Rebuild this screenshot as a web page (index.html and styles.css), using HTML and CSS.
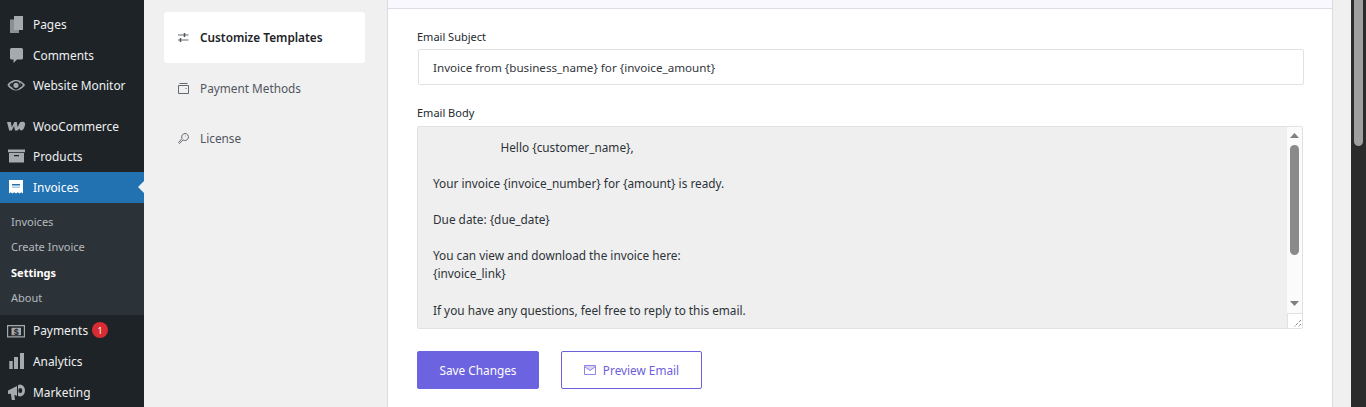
FILE: index.html
```html
<!DOCTYPE html>
<html lang="en">
<head>
<meta charset="utf-8">
<title>Invoice Settings</title>
<link rel="stylesheet" href="styles.css">
</head>
<body>
<div class="page">
  <nav class="adminmenu">
    <ul class="menu">
      <li class="item"><svg class="mi" viewBox="0 0 20 20"><path class="dim" d="M4 5.500h9V19H4z"/><path d="M8 2h9v14H8z"/></svg><span>Pages</span></li>
      <li class="item"><svg class="mi" viewBox="0 0 20 20"><path d="M5.500 3h10A1.500 1.500 0 0 1 17 4.500v8.500a1.500 1.500 0 0 1-1.500 1.500H11L7.500 18v-3.500h-2A1.500 1.500 0 0 1 4 13V4.500A1.500 1.500 0 0 1 5.500 3z"/></svg><span>Comments</span></li>
      <li class="item"><svg class="mi" viewBox="0 0 20 20"><path fill-rule="evenodd" d="M10 5c4.300 0 7.500 2.700 9 5-1.500 2.300-4.700 5.500-9 5.500S2.500 12.300 1.500 10C2.500 7.700 5.700 5 10 5zm0 1.200a4.300 4.300 0 1 0 0 8.600 4.300 4.300 0 0 0 0-8.600zM3.300 10c.9 1.200 1.900 2.100 3.100 2.800a5.600 5.600 0 0 1 0-5.600C5.200 7.900 4.200 8.800 3.300 10zm13.700 0c-.9-1.200-2-2.100-3.200-2.800a5.600 5.600 0 0 1 0 5.600c1.200-.7 2.300-1.600 3.200-2.800zM10 7.700a2.600 2.600 0 1 1 0 5.200 2.600 2.600 0 0 1 0-5.200z"/></svg><span>Website Monitor</span></li>
      <li class="item sep"><svg class="mi" viewBox="0 0 20 20"><path d="M1 6h3.800l1 5.200L8.300 6h2.500l.8 5.200L13.800 6.500c.8-1 2.200-1 3.500-.7 1.500.4 2 1.600 1.800 2.800-.3 2-1.600 6-3.700 6-1.200 0-1.800-.9-2-2l-1.900 2H9l-.9-4.500L5.800 14.600H3.200z"/></svg><span>WooCommerce</span></li>
      <li class="item"><svg class="mi" viewBox="0 0 20 20"><path fill-rule="evenodd" d="M2 3.500h17v2.700H2zM3 7h15v9.500H3zm5 2v1.300h5V9z"/></svg><span>Products</span></li>
      <li class="item current"><svg class="mi" viewBox="0 0 20 20"><path fill-rule="evenodd" d="M3 3h14v13.500l-1.700-1.200-1.700 1.200-1.800-1.200-1.800 1.200-1.800-1.200-1.800 1.200-1.700-1.200L3 16.500z"/><path class="band" d="M6 7h8v1.500H6z"/><path class="band-soft" d="M6 9.500h8V11H6z"/></svg><span>Invoices</span></li>
    </ul>
    <ul class="submenu">
      <li>Invoices</li>
      <li>Create Invoice</li>
      <li class="active">Settings</li>
      <li>About</li>
    </ul>
    <ul class="menu lower">
      <li class="item"><svg class="mi" viewBox="0 0 20 20"><path fill-rule="evenodd" d="M1 5h18v12.500H1zm1.200 1.200v10h15.600v-10zM5.500 7.800h9.500v7.400H5.500z"/><text x="10.200" y="14.500" class="dollar">$</text></svg><span>Payments</span><b class="badge">1</b></li>
      <li class="item"><svg class="mi" viewBox="0 0 20 20"><path d="M3.300 10h3.400v8H3.300zM8 6h4v12H8zM14 2h4v16h-4z"/></svg><span>Analytics</span></li>
      <li class="item"><svg class="mi" viewBox="0 0 20 20"><path fill-rule="evenodd" d="M2 8.500l9-4.500v10L8.300 12.800 9 18H5.800l-.9-6.200L2 12zM14 2.500a5 6 0 1 1 0 12 4 4 0 0 1-2-.8V3.300a4 4 0 0 1 2-.8zm.3 3.500a2 2.500 0 1 0 0 5 2 2.500 0 0 0 0-5z"/></svg><span>Marketing</span></li>
    </ul>
  </nav>

  <div class="content">
    <aside class="tabs">
      <a class="tab selected"><svg class="ti" viewBox="0 0 11 11"><path d="M0 3h10.500M0 8h10.500"/><path class="knob" d="M6.500 1v4M2.500 6v4"/></svg><span>Customize Templates</span></a>
      <a class="tab"><svg class="ti" viewBox="0 0 11 11"><path d="M1.500.5h8M.5 2.500h10v8H.5zM7.500 5.500h1"/></svg><span>Payment Methods</span></a>
      <a class="tab"><svg class="ti" viewBox="0 0 11 11"><path d="M7 .5a3.500 3.500 0 1 1-2 6.400L1.500 10.500.5 9.500 4 5.500A3.500 3.500 0 0 1 7 .5zM7.500 3h.5"/></svg><span>License</span></a>
    </aside>

    <main class="panel">
      <div class="panel-top"></div>
      <div class="panel-body">
        <label class="label">Email Subject</label>
        <div class="input">Invoice from {business_name} for {invoice_amount}</div>
        <label class="label body-label">Email Body</label>
        <div class="textarea">
          <div class="ta-text"><pre>                      Hello {customer_name},

Your invoice {invoice_number} for {amount} is ready.

Due date: {due_date}

You can view and download the invoice here:
{invoice_link}

If you have any questions, feel free to reply to this email.</pre></div>
          <div class="ta-bar">
            <svg class="arrow" viewBox="0 0 9 5"><path d="M4.500 0 9 5H0z"/></svg>
            <div class="thumb"></div>
            <svg class="arrow" viewBox="0 0 9 5"><path d="M0 0h9L4.500 5z"/></svg>
            <div class="resizer"><svg viewBox="0 0 14 14"><path d="M13 6l-7 7M13 10l-3 3"/></svg></div>
          </div>
        </div>
        <div class="actions">
          <button class="btn primary">Save Changes</button>
          <button class="btn outline"><svg class="mail" viewBox="0 0 12 10"><path class="flap" d="M.5.5h11v1L6 5.500.5 1.500z"/><path d="M.5.5h11v9H.5zM.5 1.500 6 5.500l5.500-4"/></svg>Preview Email</button>
        </div>
      </div>
    </main>
  </div>

  <div class="page-scroll"><div class="page-thumb"></div></div>
</div>
</body>
</html>
```
FILE: styles.css
```css
* { box-sizing: border-box; }
html, body { margin: 0; padding: 0; height: 407px; overflow: hidden; }
body { background: #f0f0f1; font-family: "Noto Sans", "Open Sans", sans-serif; font-size: 11.800px; color: #2c3338; }
ul { list-style: none; margin: 0; padding: 0; }
.page { display: flex; height: 407px; overflow: hidden; }

.adminmenu { width: 144px; flex: none; background: #1d2327; color: #f0f0f1; height: 407px; padding-top: 8.700px; overflow: hidden; }
.item { display: flex; align-items: center; height: 30.600px; padding-left: 6px; font-size: 11.900px; gap: 7px; color: #f0f0f1; position: relative; }
.item.sep { margin-top: 10px; }
.lower .item { height: 31px; }
.mi { width: 20px; height: 20px; fill: #a7aaad; flex: none; }
.mi .dim { fill: #8c8f94; }
.dollar { font-size: 9px; font-weight: 700; text-anchor: middle; fill: #1d2327; font-family: "Liberation Sans", sans-serif; }
.item.current { background: #2271b1; color: #fff; height: 31.200px; }
.item.current .mi { fill: #fff; }
.item.current .mi .band { fill: #2271b1; }
.item.current .mi .band-soft { fill: #a9c8e2; }
.item.current::after { content: ""; position: absolute; right: 0; top: 9px; border: 6.500px solid transparent; border-right-color: #f0f0f1; border-left: 0; }
.submenu { background: #2c3338; padding: 6px 0 5px; height: 112px; font-size: 11px; color: #b4b9be; }
.submenu li { height: 25.400px; line-height: 25.400px; padding-left: 11px; }
.submenu .active { color: #fff; font-weight: 700; }
.badge { width: 16px; height: 16px; border-radius: 50%; background: #d92b32; color: #fff; font-size: 9px; font-weight: 400; display: flex; align-items: center; justify-content: center; margin-left: -3px; }

.content { flex: 1; display: flex; min-width: 0; padding-left: 20px; }
.tabs { width: 223px; flex: none; display: flex; flex-direction: column; padding-top: 12px; }
.tab { width: 201px; height: 51px; display: flex; align-items: center; gap: 11px; padding: 0 0 1px 14px; border-radius: 3px; color: #50575e; font-size: 11.800px; }
.tab + .tab { height: 50px; padding-bottom: 0; }
.tab.selected { background: #fff; color: #1d2327; font-weight: 600; }
.ti { width: 11px; height: 11px; fill: none; stroke: #646970; stroke-width: 1; flex: none; }
.ti .knob { stroke-width: 1.500; stroke: #50575e; }

.panel { width: 946px; flex: none; background: #fff; border-left: 1px solid #dcdcde; border-right: 1px solid #dcdcde; height: 407px; display: flex; flex-direction: column; }
.panel-top { height: 9px; background: #f8f8fe; border-bottom: 1px solid #dcdce4; flex: none; }
.panel-body { padding: 19px 29px 0; }
.label { display: block; font-size: 11px; line-height: 17px; color: #23282d; }
.body-label { margin-top: 19px; }
.input { margin: 4px 0 0 1px; height: 36px; border: 1px solid #e2e2e2; border-radius: 2px; background: #fff; line-height: 36px; padding-left: 14px; color: #32373c; width: 886px; font-size: 11.650px; }
.textarea { margin-top: 5px; width: 886px; height: 203px; display: flex; border: 1px solid #e2e2e2; border-radius: 2px; background: #efefef; overflow: hidden; }
.ta-text { flex: 1; padding: 10.800px 15px 0; overflow: hidden; line-height: 18.100px; }
pre { margin: 0; font: inherit; white-space: pre; }
.ta-bar { width: 15px; flex: none; background: #fbfbfb; display: flex; flex-direction: column; align-items: center; padding-top: 6px; }
.arrow { width: 9px; height: 5px; fill: #7f7f7f; flex: none; }
.thumb { width: 9px; height: 110px; border-radius: 5px; background: #8a8a8a; margin: 7px 0 0; flex: none; }
.thumb + .arrow { margin-top: 46px; }
.resizer { width: 15px; height: 15px; margin-top: auto; background: #fff; border: 1px solid #e2e2e2; border-right: 0; border-bottom: 0; flex: none; }
.resizer svg { display: block; width: 14px; height: 14px; fill: none; stroke: #555; stroke-dasharray: 1 1; }

.actions { display: flex; gap: 22px; margin-top: 22px; }
.btn { height: 38px; border-radius: 2px; font: inherit; font-size: 11.800px; display: flex; align-items: center; justify-content: center; padding: 0; }
.primary { width: 122px; background: #6c63e0; border: 1px solid #6c63e0; color: #fff; }
.outline { width: 141px; background: #fff; border: 1px solid #6c5fdc; color: #6c5fdc; gap: 7px; }
.mail { width: 12px; height: 10px; fill: none; stroke: #8d84e6; stroke-width: 1; }
.mail .flap { fill: #d9d6f5; stroke: none; }

.page-scroll { width: 15px; flex: none; margin-left: auto; background: #2b2b2b; display: flex; justify-content: center; }
.page-thumb { width: 9px; height: 146px; border-radius: 0 0 5px 5px; background: #9f9f9f; }
```
